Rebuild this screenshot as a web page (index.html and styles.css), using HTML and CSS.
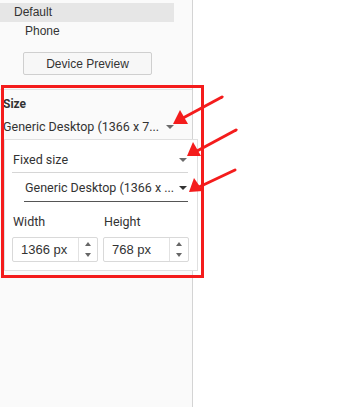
FILE: index.html
```html
<!DOCTYPE html>
<html lang="en">
<head>
    <meta charset="UTF-8">
    <meta name="viewport" content="width=device-width, initial-scale=1.0">
    <title>Device Layout</title>
    <link rel="stylesheet" href="styles.css">
</head>
<body>
    <div class="sidebar">
        <div class="device-list">
            <div class="device-item selected">Default</div>
            <div class="device-item sub">Phone</div>
        </div>
        <button class="preview-button">Device Preview</button>

        <div class="size-section">
            <div class="section-title">Size</div>
            <div class="size-select">
                <span>Generic Desktop (1366 x 7...</span>
                <span class="caret"></span>
            </div>
        </div>

        <div class="size-panel">
            <div class="dropdown">
                <span>Fixed size</span>
                <span class="caret"></span>
            </div>
            <div class="dropdown preset">
                <span>Generic Desktop (1366 x ...</span>
                <span class="caret dark"></span>
            </div>
            <div class="dimension-row">
                <div class="dimension">
                    <label>Width</label>
                    <div class="spin-input">
                        <span class="value">1366 px</span>
                        <span class="spinner">
                            <span class="up"></span>
                            <span class="down"></span>
                        </span>
                    </div>
                </div>
                <div class="dimension">
                    <label>Height</label>
                    <div class="spin-input">
                        <span class="value">768 px</span>
                        <span class="spinner">
                            <span class="up"></span>
                            <span class="down"></span>
                        </span>
                    </div>
                </div>
            </div>
        </div>
    </div>
    <div class="canvas"></div>

    <div class="highlight-box"></div>
    <svg class="annotations" width="359" height="407" viewBox="0 0 359 407">
        <g stroke="#f41c1c" stroke-width="3" stroke-linecap="round">
            <line x1="222" y1="97" x2="183" y2="118"/>
            <line x1="236" y1="130" x2="197" y2="151"/>
            <line x1="235" y1="170" x2="199" y2="187"/>
        </g>
        <g fill="#f41c1c">
            <polygon points="173,124 180,110 188,124"/>
            <polygon points="187,156 193,142 201,156"/>
            <polygon points="189,192 194,178 203,191"/>
        </g>
    </svg>
</body>
</html>
```

FILE: styles.css
```css
body {
    margin: 0;
    width: 359px;
    height: 407px;
    display: flex;
    font-family: "Liberation Sans", Arial, sans-serif;
    color: #333;
    background-color: #fff;
    overflow: hidden;
    position: relative;
}
.sidebar {
    width: 192px;
    height: 407px;
    background-color: #fafafa;
    border-right: 1px solid #d4d4d4;
    position: relative;
}
.canvas {
    flex: 1;
}
.device-list {
    padding-top: 3px;
}
.device-item {
    height: 19px;
    line-height: 19px;
    font-size: 12px;
    color: #333;
}
.device-item.selected {
    width: 160px;
    padding-left: 14px;
    background-color: #e6e6e6;
}
.device-item.sub {
    padding-left: 25px;
}
.preview-button {
    display: block;
    margin: 11px 0 0 23px;
    width: 129px;
    height: 23px;
    padding: 0;
    border: 1px solid #cfcfcf;
    border-radius: 2px;
    background-color: #f7f7f7;
    color: #333;
    font-family: "Liberation Sans", Arial, sans-serif;
    font-size: 12px;
}
.size-section {
    margin-top: 14px;
    border-top: 1px solid #e3e3e3;
    padding-left: 3px;
}
.section-title {
    margin-top: 6px;
    font-family: Roboto, "Liberation Sans", sans-serif;
    font-weight: bold;
    font-size: 12px;
    line-height: 16px;
    color: #333;
}
.size-select {
    display: flex;
    align-items: center;
    margin-top: 7px;
    width: 172px;
    justify-content: space-between;
    font-family: Roboto, "Liberation Sans", sans-serif;
    font-size: 12.5px;
    line-height: 16px;
    white-space: nowrap;
    color: #333;
}
.caret {
    width: 0;
    height: 0;
    border-left: 4px solid transparent;
    border-right: 4px solid transparent;
    border-top: 4px solid #6b6b6b;
    margin-right: 1px;
}
.caret.dark {
    border-top-color: #333;
}
.size-panel {
    position: absolute;
    left: 4px;
    top: 139px;
    width: 176px;
    height: 130px;
    border: 1px solid #e0e0e0;
    background-color: #fff;
    padding: 0 9px 0 7px;
    font-family: Roboto, "Liberation Sans", sans-serif;
    font-size: 12px;
}
.dropdown {
    display: flex;
    align-items: center;
    justify-content: space-between;
    padding: 12px 0 4px 1px;
    line-height: 16px;
    font-size: 12.5px;
    white-space: nowrap;
    border-bottom: 1px solid #d6d6d6;
}
.dropdown.preset {
    margin-left: 12px;
    padding-top: 7px;
    padding-bottom: 5px;
    border-bottom-color: #555;
}
.dimension-row {
    display: flex;
    gap: 5px;
    margin-top: 12px;
}
.dimension label {
    display: block;
    font-size: 12.5px;
    line-height: 16px;
    color: #333;
    margin-left: 1px;
}
.spin-input {
    margin-top: 7px;
    width: 84px;
    height: 23px;
    border: 1px solid #d9d9d9;
    border-radius: 2px;
    display: flex;
    font-family: "Liberation Sans", Arial, sans-serif;
}
.spin-input .value {
    flex: 1;
    padding-left: 8px;
    line-height: 23px;
    font-size: 13px;
    color: #333;
}
.spinner {
    width: 18px;
    border-left: 1px solid #e2e2e2;
    display: flex;
    flex-direction: column;
}
.spinner .up, .spinner .down {
    flex: 1;
    display: flex;
    align-items: center;
    justify-content: center;
}
.spinner .up::after {
    content: "";
    border-left: 3px solid transparent;
    border-right: 3px solid transparent;
    border-bottom: 4px solid #666;
}
.spinner .down::after {
    content: "";
    border-left: 3px solid transparent;
    border-right: 3px solid transparent;
    border-top: 4px solid #666;
}
.highlight-box {
    position: absolute;
    left: 1px;
    top: 85px;
    width: 197px;
    height: 187px;
    border: 3px solid #f41c1c;
    pointer-events: none;
}
.annotations {
    position: absolute;
    left: 0;
    top: 0;
    pointer-events: none;
}
```
